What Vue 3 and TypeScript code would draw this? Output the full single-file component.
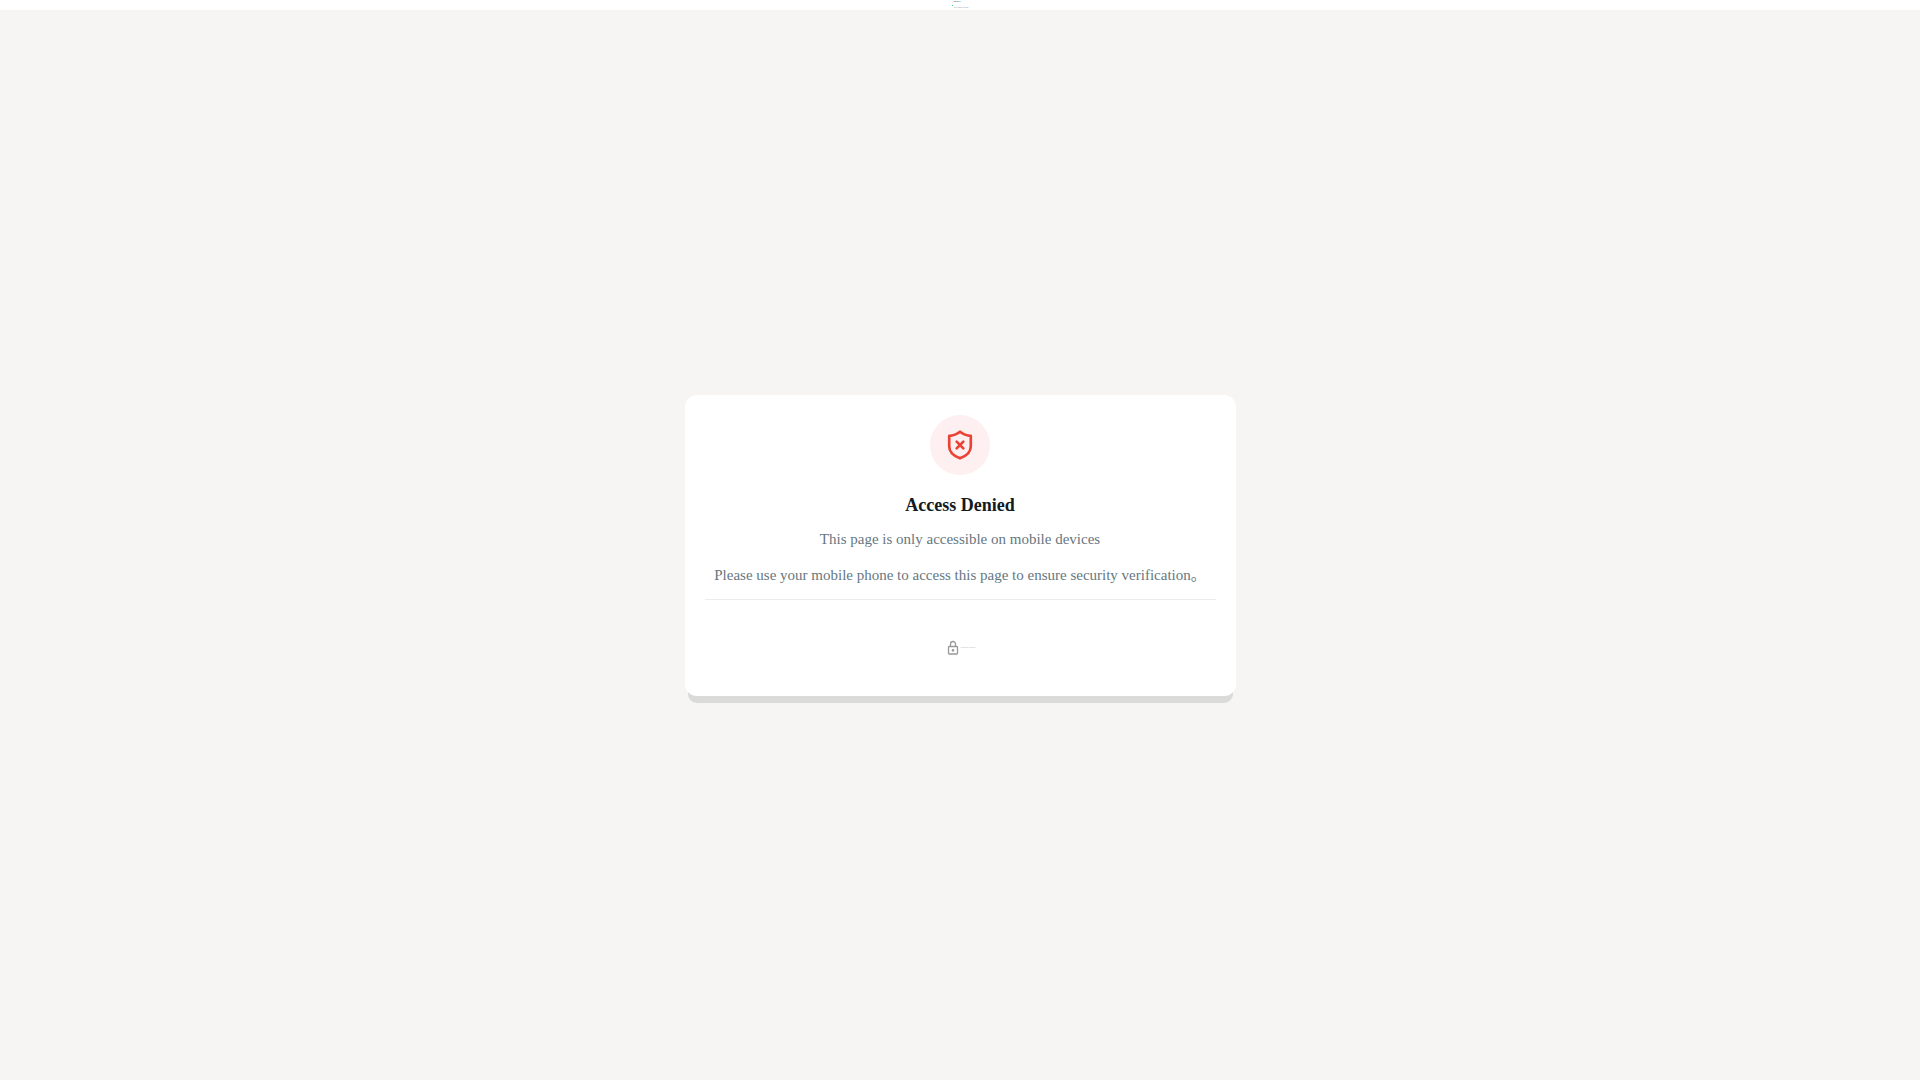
<script setup lang="ts">
const brand: string = 'WhatsApp'
const product: string = 'Web'
const tagline: string = 'Secure verification for your account'
const notices: string[] = [
  'This page is only accessible on mobile devices',
  'Please use your mobile phone to access this page to ensure security verification。',
]
</script>

<template>
  <div class="page">
    <header class="bar">
      <span class="dot"></span>
      <div class="brand">
        <span class="name">{{ brand }} <b>{{ product }}</b></span>
        <span class="tagline">{{ tagline }}</span>
      </div>
    </header>
    <main class="content">
      <section class="card">
        <div class="badge">
          <svg width="32" height="32" viewBox="0 0 24 24" fill="none" stroke="#ea4335" stroke-width="2" stroke-linecap="round" stroke-linejoin="round" aria-hidden="true">
            <path d="M12 2 C10 3.600 6.800 4.900 3.900 5.100 V13 C3.900 17.300 7.500 20.400 12 22 C16.500 20.400 20.100 17.300 20.100 13 V5.100 C17.200 4.900 14 3.600 12 2 Z" />
            <path d="M9.500 9.500 L14.500 14.500 M14.500 9.500 L9.500 14.500" />
          </svg>
        </div>
        <h1>Access Denied</h1>
        <p v-for="notice in notices" :key="notice">{{ notice }}</p>
        <footer class="foot">
          <svg width="16" height="16" viewBox="0 0 16 16" fill="none" stroke="#999" stroke-width="1.300" aria-hidden="true">
            <rect x="3.500" y="6.500" width="9" height="7.500" rx="0.800" />
            <path d="M5.500 6.500 V4 A2.500 2.500 0 0 1 10.500 4 V6.500" />
            <circle cx="8" cy="10.300" r="0.700" />
          </svg>
          <span class="secure">Secured with end-to-end encryption</span>
        </footer>
      </section>
    </main>
  </div>
</template>

<style>
body {
  margin: 0;
}
</style>

<style scoped>
.page {
  display: flex;
  flex-direction: column;
  min-height: 100vh;
  background: #f6f5f3;
  font-family: "Liberation Serif", "Noto Sans CJK SC", serif;
}
.bar {
  display: flex;
  align-items: center;
  justify-content: center;
  gap: 1px;
  height: 10px;
  background: #fff;
}
.dot {
  width: 1px;
  height: 1px;
  background: #25d366;
}
.brand {
  display: flex;
  flex-direction: column;
  justify-content: space-between;
  height: 8px;
}
.name,
.tagline {
  font-size: 1px;
  line-height: 2px;
}
.name {
  color: #111b21;
  font-weight: bold;
}
.name b {
  color: #00a884;
}
.tagline {
  color: #667781;
}
.content {
  flex: 1;
  display: flex;
  align-items: center;
  justify-content: center;
}
.card {
  display: flex;
  flex-direction: column;
  align-items: center;
  box-sizing: border-box;
  width: 100%;
  max-width: 551px;
  padding: 20px 20px 0;
  border-radius: 12px;
  background: #fff;
  box-shadow: 0 10px 0 -3px #dadad9;
  text-align: center;
}
.badge {
  display: flex;
  align-items: center;
  justify-content: center;
  width: 60px;
  height: 60px;
  border-radius: 50%;
  background: #fef0f0;
}
h1 {
  margin: 20px 0 12px;
  color: #111b21;
  font-size: 18px;
  line-height: 20px;
}
p {
  margin: 0 0 12px;
  color: #667781;
  font-size: 15px;
  line-height: 24px;
}
.foot {
  display: flex;
  align-items: center;
  justify-content: center;
  align-self: stretch;
  height: 96px;
  border-top: 1px solid #e9edef;
}
.secure {
  color: #999;
  font-size: 1px;
  line-height: 2px;
}
</style>
